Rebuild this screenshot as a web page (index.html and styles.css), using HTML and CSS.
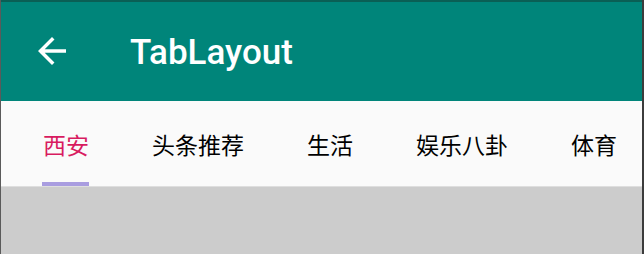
FILE: index.html
```html
<!DOCTYPE html>
<html>
<head>
<meta charset="utf-8">
<link rel="stylesheet" href="styles.css">
</head>
<body>
<div class="screen">
  <header class="toolbar">
    <svg class="back" viewBox="0 0 24 24" width="42" height="42"><path fill="#fff" d="M20 11H7.83l5.59-5.59L12 4l-8 8 8 8 1.41-1.41L7.83 13H20v-2z"/></svg>
    <h1 class="title">TabLayout</h1>
  </header>
  <nav class="tabs">
    <div class="tab selected"><span class="label">西安</span><span class="indicator"></span></div>
    <div class="tab"><span class="label">头条推荐</span><span class="indicator"></span></div>
    <div class="tab"><span class="label">生活</span><span class="indicator"></span></div>
    <div class="tab"><span class="label">娱乐八卦</span><span class="indicator"></span></div>
    <div class="tab"><span class="label">体育</span><span class="indicator"></span></div>
  </nav>
  <main class="content"></main>
</div>
</body>
</html>
```

FILE: styles.css
```css
html, body {
  margin: 0;
  padding: 0;
}
body {
  width: 644px;
  height: 254px;
  overflow: hidden;
  font-family: Roboto, "Noto Sans CJK SC", sans-serif;
}
.screen {
  box-sizing: border-box;
  width: 644px;
  height: 254px;
  border-left: 1px solid #5a5a5a;
  border-right: 2px solid #3c3c3c;
  display: flex;
  flex-direction: column;
  background: #cccccc;
  overflow: hidden;
}
.toolbar {
  box-sizing: border-box;
  height: 101px;
  border-top: 2px solid #0a5f55;
  background: #00857a;
  display: flex;
  align-items: center;
  flex-shrink: 0;
}
.back {
  display: block;
  margin-left: 30px;
  margin-top: -2px;
}
.title {
  margin: 2px 0 0 57px;
  color: #ffffff;
  font-family: Roboto, sans-serif;
  font-weight: 500;
  font-size: 35px;
  line-height: 40px;
  letter-spacing: 0;
}
.tabs {
  display: flex;
  height: 85px;
  margin-left: -1px;
  background: #fafafa;
  border-bottom: 1px solid #dedede;
  flex-shrink: 0;
}
.tab {
  width: 132px;
  flex-shrink: 0;
  display: flex;
  flex-direction: column;
  align-items: center;
}
.label {
  flex: 1;
  display: flex;
  align-items: center;
  font-family: "Noto Sans CJK SC", sans-serif;
  font-size: 23px;
  color: #000000;
  padding-top: 5px;
}
.indicator {
  width: 47px;
  height: 4px;
  margin-right: 2px;
}
.tab.selected .label {
  color: #d81b60;
}
.tab.selected .indicator {
  background: #a99de0;
}
.content {
  flex: 1;
  background: #cccccc;
}
```
